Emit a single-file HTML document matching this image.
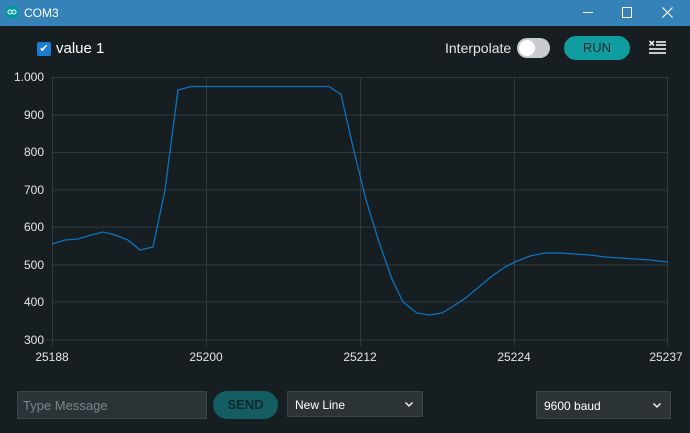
<!DOCTYPE html>
<html><head><style>
body{margin:0;width:690px;height:433px;background:#171e21;font-family:"Liberation Sans",sans-serif;overflow:hidden;position:relative}
.tb{position:absolute;left:0;top:0;width:690px;height:26px;background:#3582b8;color:#fff;font-size:12px}
.abs{position:absolute}
</style></head><body>
<div class="tb">
<div class="abs" style="left:6px;top:6px;width:12px;height:12px;background:#00979d;border-radius:2px"><svg width="12" height="12"><circle cx="4" cy="6" r="2" fill="none" stroke="#fff"/><circle cx="8" cy="6" r="2" fill="none" stroke="#fff"/></svg></div>
<div class="abs" style="left:24px;top:6px">COM3</div>
<div class="abs" style="left:583px;top:12px;width:10px;height:1px;background:#fff"></div>
<div class="abs" style="left:622px;top:7px;width:8px;height:9px;border:1px solid #fff"></div>
<svg class="abs" style="left:662px;top:7px" width="11" height="11"><path d="M0.5 0.5L10.5 10.5M10.5 0.5L0.5 10.5" stroke="#fff" stroke-width="1.2"/></svg>
</div>
<div class="abs" style="left:37px;top:42px;width:14px;height:14px;background:#1a7ed0;border-radius:2px;color:#fff;font-size:11px;line-height:14px;text-align:center">✔</div>
<div class="abs" style="left:56px;top:40px;color:#fff;font-size:15px">value 1</div>
<div class="abs" style="left:445px;top:40px;color:#e6e6e6;font-size:14px">Interpolate</div>
<div class="abs" style="left:517px;top:38px;width:33px;height:20px;background:#c9cccc;border-radius:10px"><div style="position:absolute;left:2px;top:2px;width:16px;height:16px;background:#fff;border-radius:50%"></div></div>
<div class="abs" style="left:564px;top:36px;width:66px;height:24px;background:#0f9da2;border-radius:12px;color:#1a2a2c;font-size:13px;line-height:24px;text-align:center">RUN</div>
<svg class="abs" style="left:648px;top:40px" width="20" height="16"><g stroke="#fff" stroke-width="1.5"><path d="M1.5 1L6 5.5M6 1L1.5 5.5"/><path d="M8 2H18M8 5H18M1 9H18M1 13H18"/></g></svg>
<svg class="abs" style="left:0;top:66px" width="690" height="300">
<g stroke="#30383b" stroke-width="1">
<line x1="52" y1="11.5" x2="668" y2="11.5"/><line x1="52" y1="49" x2="668" y2="49"/><line x1="52" y1="86.5" x2="668" y2="86.5"/><line x1="52" y1="124" x2="668" y2="124"/><line x1="52" y1="161" x2="668" y2="161"/><line x1="52" y1="199" x2="668" y2="199"/><line x1="52" y1="236" x2="668" y2="236"/><line x1="46" y1="274" x2="668" y2="274"/>
<line x1="52.5" y1="11" x2="52.5" y2="280"/><line x1="206.5" y1="11" x2="206.5" y2="280"/><line x1="360.5" y1="11" x2="360.5" y2="280"/><line x1="514.5" y1="11" x2="514.5" y2="280"/><line x1="667.5" y1="11" x2="667.5" y2="280"/>
</g>
<polyline fill="none" stroke="#0a74c0" stroke-width="1.3" transform="translate(0,-66)" points="52,244 65,240 78,239 91,235 103,232 115,235 128,240 140,250 153,247 165,190 178,90 191,86.5 329,86.5 341,94.5 353,147 366,200 379,242 392,279 403,302 417,313 429,315 442,313 455,305 467,297 480,286 492,276 505,267 515,262 530,256 545,253 560,253 575,254 590,255 605,257 620,258 635,259 650,260 668,262"/>
<g fill="#e6e6e6" font-size="12" font-family="Liberation Sans" text-anchor="end">
<text x="44" y="15">1.000</text><text x="44" y="53">900</text><text x="44" y="90">800</text><text x="44" y="128">700</text><text x="44" y="165">600</text><text x="44" y="203">500</text><text x="44" y="240">400</text><text x="44" y="278">300</text>
</g>
<g fill="#e6e6e6" font-size="12" font-family="Liberation Sans" text-anchor="middle">
<text x="52" y="295">25188</text><text x="206" y="295">25200</text><text x="360" y="295">25212</text><text x="514" y="295">25224</text><text x="666" y="295">25237</text>
</g>
</svg>
<div class="abs" style="left:17px;top:391px;width:190px;height:28px;background:#2c3337;border:1px solid #3a4246;color:#7c8589;font-size:13px;line-height:28px;padding-left:5px;box-sizing:border-box">Type Message</div>
<div class="abs" style="left:213px;top:391px;width:65px;height:28px;background:#145d63;border-radius:14px;color:#0a2a2e;font-size:13px;line-height:28px;text-align:center;font-weight:bold">SEND</div>
<div class="abs" style="left:287px;top:391px;width:136px;height:26px;background:#2c3337;border:1px solid #3a4246;color:#fff;font-size:12px;line-height:26px;padding-left:7px;box-sizing:border-box">New Line<svg style="position:absolute;right:9px;top:10px" width="8" height="5"><path d="M0.5 0.5L4 4L7.5 0.5" stroke="#fff" fill="none" stroke-width="1.3"/></svg></div>
<div class="abs" style="left:536px;top:391px;width:135px;height:28px;background:#2c3337;border:1px solid #3a4246;color:#fff;font-size:12px;line-height:28px;padding-left:7px;box-sizing:border-box">9600 baud<svg style="position:absolute;right:9px;top:11px" width="8" height="5"><path d="M0.5 0.5L4 4L7.5 0.5" stroke="#fff" fill="none" stroke-width="1.3"/></svg></div>
</body></html>
